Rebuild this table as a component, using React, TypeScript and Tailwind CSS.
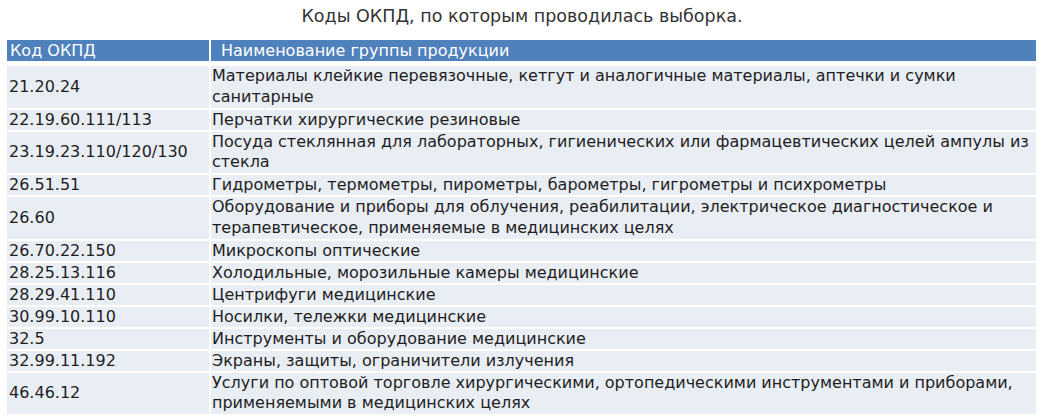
const rows: [string, string, boolean][] = [
  ['21.20.24', 'Материалы клейкие перевязочные, кетгут и аналогичные материалы, аптечки и сумки санитарные', true],
  ['22.19.60.111/113', 'Перчатки хирургические резиновые', false],
  ['23.19.23.110/120/130', 'Посуда стеклянная для лабораторных, гигиенических или фармацевтических целей ампулы из стекла', true],
  ['26.51.51', 'Гидрометры, термометры, пирометры, барометры, гигрометры и психрометры', false],
  ['26.60', 'Оборудование и приборы для облучения, реабилитации, электрическое диагностическое и терапевтическое, применяемые в медицинских целях', true],
  ['26.70.22.150', 'Микроскопы оптические', false],
  ['28.25.13.116', 'Холодильные, морозильные камеры медицинские', false],
  ['28.29.41.110', 'Центрифуги медицинские', false],
  ['30.99.10.110', 'Носилки, тележки медицинские', false],
  ['32.5', 'Инструменты и оборудование медицинские', false],
  ['32.99.11.192', 'Экраны, защиты, ограничители излучения', false],
  ['46.46.12', 'Услуги по оптовой торговле хирургическими, ортопедическими инструментами и приборами, применяемыми в медицинских целях', true],
];

export default function App() {
  return (
    <div className="w-[1044px] h-[418px] bg-white overflow-hidden font-['DejaVu_Sans',sans-serif] text-[#1e1e1e]">
      <div className="h-[40px] pt-[4px] text-center text-[17.5px] leading-[24px] text-[#333]">
        Коды ОКПД, по которым проводилась выборка.
      </div>
      <div className="ml-[7px] mr-[8px]">
        <div className="grid grid-cols-[202px_1fr] gap-x-[2px] mb-[5px]">
          <div className="bg-[#4f81bd] h-[21px] pl-[3px] text-white text-[16px] leading-[21px]">Код ОКПД</div>
          <div className="bg-[#4f81bd] h-[21px] pl-[10px] text-white text-[16px] leading-[21px]">Наименование группы продукции</div>
        </div>
        <div className="grid grid-cols-[202px_1fr] gap-x-[2px] gap-y-[2px]">
          {rows.map(([code, name, tall]) => (
            <>
              <div key={code + 'c'} className="bg-[#e9edf4] pl-[2px] text-[16px] leading-[20px] flex items-center">{code}</div>
              <div key={code + 'n'} className={tall ? 'bg-[#e9edf4] pl-[1px] text-[16px] leading-[20.75px]' : 'bg-[#e9edf4] pl-[1px] text-[16px] leading-[20px]'}>{name}</div>
            </>
          ))}
        </div>
      </div>
    </div>
  );
}
